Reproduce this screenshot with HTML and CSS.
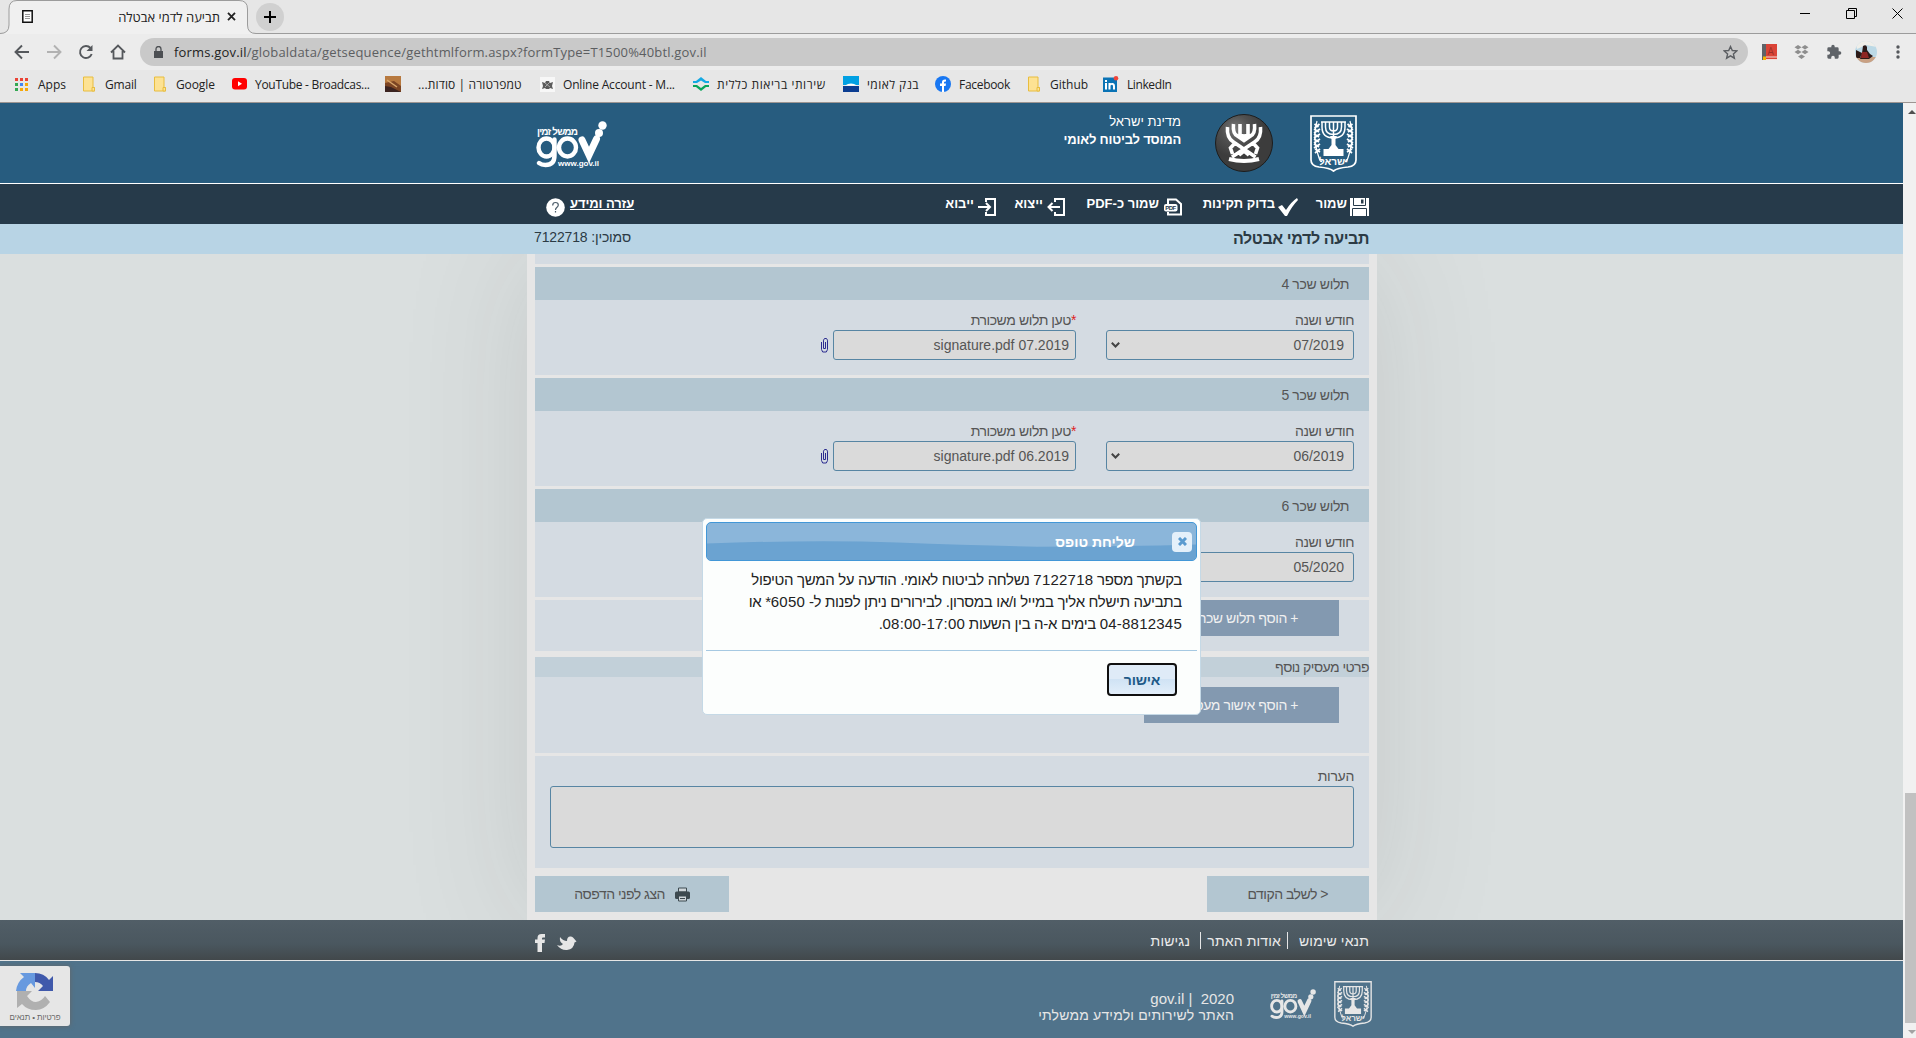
FILE: index.html
```html
<!DOCTYPE html>
<html lang="he">
<head>
<meta charset="utf-8">
<title>תביעה לדמי אבטלה</title>
<link rel="stylesheet" href="styles.css">
</head>
<body>
<svg width="0" height="0" class="defs">
  <defs>
    <symbol id="folder" viewBox="0 0 16 16"><path d="M2.500 1h9.500v10.500h1.500V15h-11z" fill="#fde293" stroke="#e8bd3f"/><path d="M11 11.500h2.500V15H11z" fill="#fde293" stroke="#e8bd3f"/></symbol>
    <symbol id="clip" viewBox="0 0 8 15"><path d="M.5 4v7.500l1.200 2.500h3.600l1.200-2.500V2.200L5.500.5h-2L2.500 2.200v8.300h2V4" fill="none" stroke="#2b2b8f"/></symbol>
    <symbol id="emblem" viewBox="0 0 47 57">
      <path d="M1 1h45v44q0 6-8 7-11 1-14.500 4Q20 53 9 52q-8-1-8-7z" fill="none" stroke="currentColor" stroke-width="1.700"/>
      <g fill="none" stroke="currentColor" stroke-width="1.500">
        <path d="M12 7v5q0 11 11.500 11T35 12V7M15.500 7v5q0 7.500 8 7.500t8-7.500V7M19.500 7v5q0 4 4 4t4-4V7M11 7h25M23.500 7v25"/>
        <path d="M7 6q-4 15 0 30t5 9M40 6q4 15 0 30t-5 9" stroke-width="1.200"/>
        <path d="M4.500 9l4 3M4 14l5 3M4 19l5 3M4 24l5 3M4 29l5 3M5 34l5 3M9.500 9l-5 4M10 14l-6 4M10 19l-6 4M10 24l-6 4M10 29l-6 4M10 34l-5 4M42.500 9l-4 3M43 14l-5 3M43 19l-5 3M43 24l-5 3M43 29l-5 3M42 34l-5 3M37.500 9l5 4M37 14l6 4M37 19l6 4M37 24l6 4M37 29l6 4M37 34l5 4" stroke-width="1.800"/>
      </g>
      <path d="M20 21h7l-1.500 3v6l3 4h5v7H13.500v-7h5l3-4v-6z" fill="currentColor"/>
      <text x="23.500" y="50" text-anchor="middle" font-size="10" font-weight="bold" fill="currentColor">ישראל</text>
    </symbol>
    <symbol id="gov" viewBox="0 0 71 47">
      <g fill="none" stroke="currentColor" stroke-width="4.400" stroke-linecap="round">
        <ellipse cx="10.500" cy="26.500" rx="8" ry="9"/><path d="M18.500 18.500v16q0 9.500-9 9.500-4 0-6.500-2"/>
        <ellipse cx="31.500" cy="26.500" rx="8.500" ry="9"/><path d="M46 19l7 15 7.500-16" stroke-width="7"/>
      </g>
      <circle cx="63" cy="12" r="4" fill="currentColor"/><circle cx="66.500" cy="4.500" r="4.200" fill="currentColor"/>
      <text x="1" y="14" textLength="41" font-size="10" font-weight="bold" fill="currentColor">ממשל זמין</text>
      <text x="22" y="45" textLength="41" font-size="8" font-weight="bold" fill="currentColor">www.gov.il</text>
    </symbol>
  </defs>
</svg>

<div class="chrome">
  <div class="tabstrip">
    <svg class="tabline" width="256" height="34" viewBox="0 0 256 34"><path d="M0 33.500Q9 33.500 9 25V9Q9 .5 17 .5H239Q247.500 .5 247.500 9V25Q247.500 33.500 256 33.500V35H0z" fill="#f0f0f0" stroke="#9c9c9c"/></svg>
    <div class="tab">
      <svg width="11" height="13"><path d="M.8.800h9.400v11.400H.8z" fill="#fff" stroke="#111" stroke-width="1.500"/><path d="M3 4.500h5M3 6.500h5M3 8.500h5" stroke="#999"/></svg>
      <span class="tabtitle" dir="rtl">תביעה לדמי אבטלה</span>
      <svg width="9" height="9"><path d="M1 .8l7 7.400M8 .8L1 8.200" stroke="#222" stroke-width="1.800"/></svg>
    </div>
    <div class="newtab"><svg width="12" height="12"><path d="M6 0v12M0 6h12" stroke="#000" stroke-width="2"/></svg></div>
    <div class="winbtns">
      <svg width="11" height="11"><path d="M0 5.500h10" stroke="#000"/></svg>
      <svg width="11" height="11"><path d="M.5 2.500h8v8h-8zM2.500 2.500v-2h8v8h-2" fill="none" stroke="#000"/></svg>
      <svg width="11" height="11"><path d="M.5.500l10 10M10.500.500l-10 10" stroke="#000"/></svg>
    </div>
  </div>
  <div class="toolbar">
    <div class="navicons">
      <svg width="16" height="16" viewBox="0 0 16 16"><path d="M15 8H2M8 1.500L1.500 8 8 14.500" fill="none" stroke="#55585c" stroke-width="1.900"/></svg>
      <svg width="16" height="16" viewBox="0 0 16 16"><path d="M1 8h13M8 1.500L14.500 8 8 14.500" fill="none" stroke="#b2b2b2" stroke-width="1.900"/></svg>
      <svg width="16" height="16" viewBox="0 0 16 16"><path d="M13.700 10A6 6 0 1 1 12.500 4" fill="none" stroke="#55585c" stroke-width="1.900"/><path d="M14.500 1v6h-6z" fill="#55585c"/></svg>
      <svg width="16" height="16" viewBox="0 0 16 16"><path d="M1 8.500L8 1.500l7 7M3.500 7v7.500h9V7" fill="none" stroke="#55585c" stroke-width="1.800"/></svg>
    </div>
    <div class="url">
      <svg width="9" height="13" viewBox="0 0 9 13"><path d="M0 5h9v7H0z" fill="#4c4f53"/><path d="M2 5V3a2.500 2.500 0 0 1 5 0v2" fill="none" stroke="#4c4f53" stroke-width="1.300"/></svg>
      <span class="urltext"><b>forms.gov.il</b>/globaldata/getsequence/gethtmlform.aspx?formType=T1500%40btl.gov.il</span>
      <svg width="15" height="15" viewBox="0 0 15 15"><path d="M7.500 1.500l1.800 4 4.400.4-3.300 3 1 4.300-3.900-2.300-3.900 2.300 1-4.300-3.300-3 4.400-.4z" fill="none" stroke="#5b5e62" stroke-width="1.400"/></svg>
    </div>
    <div class="exts">
      <svg width="15" height="16"><path d="M0 0h15v16H0z" fill="#db4437"/><path d="M0 0h4v16H0z" fill="#5f6368"/><path d="M4 13h11M4 15.500h11" stroke="#f3dcd9"/><path d="M1 12.500h3V16H1z" fill="#f4b400"/><text x="5.500" y="10.500" font-size="10" fill="#9d3028">A</text></svg>
      <svg width="15" height="14" viewBox="0 0 15 14"><path d="M4 0l3.500 2.300L4 4.600.5 2.300zM11 0l3.500 2.300L11 4.600 7.500 2.300zM4 4.700L7.500 7 4 9.300.5 7zM11 4.700L14.500 7 11 9.300 7.500 7zM7.500 9.400L11 11.500 7.500 14 4 11.500z" fill="#8e8e8e"/></svg>
      <svg width="16" height="16" viewBox="0 0 24 24"><path d="M20.500 11H19V7a2 2 0 0 0-2-2h-4V3.500a2.500 2.500 0 0 0-5 0V5H4a2 2 0 0 0-2 2v3.800h1.500a2.700 2.700 0 0 1 0 5.400H2V20a2 2 0 0 0 2 2h3.800v-1.500a2.700 2.700 0 0 1 5.400 0V22H17a2 2 0 0 0 2-2v-4h1.500a2.500 2.500 0 0 0 0-5z" fill="#5f6368"/></svg>
      <svg class="avatar" width="22" height="22" viewBox="0 0 22 22"><path d="M0 0h22v22H0z" fill="#bcd9e6"/><path d="M0 0h22v6L11 4 2 8z" fill="#efeee9"/><path d="M0 16h22v6H0z" fill="#c9a184"/><path d="M1 9l6 3-2 5H1zM8 5q3-2 4 1v3l3 4 3 2-4 3H5l2-6z" fill="#2c1a18"/><path d="M7 11h5l2 6H6z" fill="#8e2522"/></svg>
      <svg width="4" height="14"><g fill="#55585c"><circle cx="2" cy="2" r="1.700"/><circle cx="2" cy="7" r="1.700"/><circle cx="2" cy="12" r="1.700"/></g></svg>
    </div>
  </div>
  <div class="bookmarks">
    <div class="bm apps"><svg width="13" height="13"><path d="M0 0h3v3H0zM5 0h3v3H5zM10 0h3v3h-3z" fill="#ea4335"/><path d="M0 5h3v3H0zM0 10h3v3H0z" fill="#34a853"/><path d="M5 5h3v3H5z" fill="#4285f4"/><path d="M10 5h3v3h-3zM5 10h3v3H5zM10 10h3v3h-3z" fill="#f5a80b"/></svg><span>Apps</span></div>
    <div class="bm gmail"><svg width="16" height="16"><use href="#folder"/></svg><span>Gmail</span></div>
    <div class="bm google"><svg width="16" height="16"><use href="#folder"/></svg><span>Google</span></div>
    <div class="bm youtube"><svg width="15" height="12"><rect width="15" height="11.500" rx="3" fill="#f00"/><path d="M6 3.300v5l4-2.500z" fill="#fff"/></svg><span>YouTube - Broadcas...</span></div>
    <div class="bm temp"><svg width="16" height="16"><path d="M0 0h16v16H0z" fill="#7b4423"/><path d="M0 0h16v10L9 5 0 7z" fill="#b7793f"/><path d="M0 10l6 1 10 5H0z" fill="#3b2320"/><path d="M2 4l10 7" stroke="#d8a66b" stroke-width="1.500"/></svg><span dir="rtl">טמפרטורה | סודות...</span></div>
    <div class="bm online"><svg width="15" height="15"><path d="M0 0h15v15H0z" fill="#f7f7f7"/><path d="M2 5l3 1 1-2h3l1 2 3-1-1 4 1 3-3-1-1 1H6l-1-1-3 1 1-3z" fill="#5c5c5c"/><path d="M5 6l5 4M10 5l-5 5" stroke="#bbb" stroke-width=".8"/></svg><span>Online Account - M...</span></div>
    <div class="bm clalit"><svg width="16" height="16" viewBox="0 0 16 16"><path d="M0 7V5h3l5-4 5 4h3v2h-4L8 4.500 4 7z" fill="#14a9e3"/><path d="M0 9v2h3l5 4 5-4h3V9h-4l-4 3-4-3z" fill="#0aa55b"/></svg><span dir="rtl">שירותי בריאות כללית</span></div>
    <div class="bm leumi"><svg width="16" height="16"><path d="M0 0h16v9H0z" fill="#00a0e3"/><path d="M0 10h16v6H0z" fill="#0b3d91"/><path d="M2 9.500q6-4 12 0z" fill="#fff"/></svg><span dir="rtl">בנק לאומי</span></div>
    <div class="bm fb"><svg width="16" height="16"><circle cx="8" cy="8" r="8" fill="#1877f2"/><path d="M7 16v-6H5V7.500h2V6q0-3 4-2.500v2Q9 5.300 9 6.500v1h2L10.600 10H9v6z" fill="#fff"/></svg><span>Facebook</span></div>
    <div class="bm github"><svg width="16" height="16"><use href="#folder"/></svg><span>Github</span></div>
    <div class="bm linkedin"><svg width="16" height="16"><path d="M0 1.500h14V16H0z" fill="#0a73b5"/><path d="M2 7h2v6.500H2zM2 4h2v2H2zM5.500 7h2v6.500h-2zM7 8q1-1.500 3-1 2 .4 2 3v3.500h-2V10Q9.500 8 7.500 9.500z" fill="#fff"/><circle cx="13" cy="2.300" r="2.300" fill="#f0453a"/></svg><span>LinkedIn</span></div>
  </div>
</div>

<div class="viewport">
  <div class="page" dir="rtl">
    <header class="masthead">
      <div class="wrap">
        <svg class="state" width="47" height="57"><use href="#emblem"/></svg>
        <svg class="btl" width="58" height="58" viewBox="0 0 58 58"><defs><radialGradient id="disc" cx=".35" cy=".25"><stop offset="0" stop-color="#777"/><stop offset=".5" stop-color="#505050"/><stop offset="1" stop-color="#3c3c3c"/></radialGradient></defs><circle cx="29" cy="29" r="28.500" fill="url(#disc)" stroke="#1d1d1d"/><g fill="none" stroke="#fff" stroke-width="3.600"><path d="M12.500 13q-1 11 6 15l22 15M45.500 13q1 11-6 15L17 43M18.500 10q-1 10 4 12l6.500 4.500 6.500-4.500q5-2 4-12M25 10v10l4 2.500 4-2.500V10M20 29l-4.500 5 2 6M38 29l4.500 5-2 6M29 37l-5 4M29 37l5 4"/><path d="M14 45q15 4 30 0" stroke-width="4"/></g></svg>
        <div class="org"><span>מדינת ישראל</span><b>המוסד לביטוח לאומי</b></div>
        <svg class="govlogo" width="71" height="47"><use href="#gov"/></svg>
      </div>
    </header>
    <nav class="actions">
      <div class="wrap">
        <a class="act save"><svg width="19" height="18"><path d="M0 0h19v18H0z" fill="#fff"/><path d="M3.500 0v7.500h12V0M2.500 18v-7.500h14V18" fill="none" stroke="#263a4a"/><path d="M11 1.500h2.500v4H11z" fill="#263a4a"/></svg><span>שמור</span></a>
        <a class="act check"><svg width="20" height="18"><path d="M0 9l4-2 4 5Q13 4 19 0l1 2Q14 8 9 18H7z" fill="#fff"/></svg><span>בדוק תקינות</span></a>
        <a class="act pdf"><svg width="18" height="18"><path d="M4 6V1.500h8l5 4.500v10.500H4V14" fill="none" stroke="#fff" stroke-width="2"/><rect y="6" width="13.500" height="7.500" rx="2" fill="#fff"/><text x="1.200" y="12" textLength="11" font-size="6" font-weight="bold" fill="#263a4a">PDF</text></svg><span>שמור כ-PDF</span></a>
        <a class="act export"><svg width="18" height="18"><path d="M8 4V1h9v16H8v-3M13 9H2M5.500 5L1.500 9l4 4" fill="none" stroke="#fff" stroke-width="2"/></svg><span>ייצוא</span></a>
        <a class="act import"><svg width="18" height="18"><path d="M8 4V1h9v16H8v-3M0 9h11M8 5l4 4-4 4" fill="none" stroke="#fff" stroke-width="2"/></svg><span>ייבוא</span></a>
        <a class="act help"><span>עזרה ומידע</span><svg width="19" height="19"><circle cx="9.500" cy="9.500" r="9.300" fill="#fff"/><path d="M6.700 7.500q0-3 2.800-3t2.800 2.600q0 1.400-1.500 2.400-1.300 1-1.300 2.500M9.500 13v1.500" fill="none" stroke="#4b5c69" stroke-width="1.200"/></svg></a>
      </div>
    </nav>
    <div class="titlebar"><div class="wrap"><h1>תביעה לדמי אבטלה</h1><span>סמוכין: 7122718</span></div></div>

    <main class="content">
      <div class="sheet">
        <div class="tail"></div>
        <section>
          <h2>תלוש שכר 4</h2>
          <div class="fields">
            <div class="field month"><label>חודש ושנה</label><div class="box">07/2019<svg width="9" height="6"><path d="M.8.800l3.700 3.700L8.200.800" fill="none" stroke="#444" stroke-width="2"/></svg></div></div>
            <div class="field file"><label><i>*</i>טען תלוש משכורת</label><div class="row"><div class="box"><span dir="ltr">signature.pdf 07.2019</span></div><svg class="clip" width="8" height="15"><use href="#clip"/></svg></div></div>
          </div>
        </section>
        <section>
          <h2>תלוש שכר 5</h2>
          <div class="fields">
            <div class="field month"><label>חודש ושנה</label><div class="box">06/2019<svg width="9" height="6"><path d="M.8.800l3.700 3.700L8.200.800" fill="none" stroke="#444" stroke-width="2"/></svg></div></div>
            <div class="field file"><label><i>*</i>טען תלוש משכורת</label><div class="row"><div class="box"><span dir="ltr">signature.pdf 06.2019</span></div><svg class="clip" width="8" height="15"><use href="#clip"/></svg></div></div>
          </div>
        </section>
        <section>
          <h2>תלוש שכר 6</h2>
          <div class="fields">
            <div class="field month"><label>חודש ושנה</label><div class="box">05/2020</div></div>
          </div>
        </section>
        <section class="add"><button>+ הוסף תלוש שכר</button></section>
        <section class="employer">
          <h3>פרטי מעסיק נוסף</h3>
          <button>+ הוסף אישור מעסיק</button>
        </section>
        <section class="notes"><label>הערות</label><div class="area"></div></section>
        <div class="steps">
          <button class="prev">&lt; לשלב הקודם</button>
          <button class="print"><svg width="15" height="15"><path d="M3.500 1h8v4h-8z" fill="#cfd6da" stroke="#3d4a50"/><rect y="4.500" width="15" height="7.500" rx="1.500" fill="#3d4a50"/><path d="M3.500 9h8v5h-8z" fill="#cfd6da" stroke="#3d4a50"/><path d="M5 11.500h5" stroke="#3d4a50"/></svg><span>הצג לפני הדפסה</span></button>
        </div>
      </div>
    </main>

    <div class="links">
      <div class="wrap">
        <a class="terms">תנאי שימוש</a><a class="about">אודות האתר</a><a class="access">נגישות</a>
        <div class="social">
          <svg width="20" height="15" viewBox="0 0 20 15"><path d="M0 9q4 2 6-1Q2 6 3 1q3 4 7 4Q10 0 14 .500q1.500 0 2.500 1.500L19.500 5.500 17.500 6.500Q17 13 10 14 4 14.500 0 9z" fill="#e6e6e6"/></svg>
          <svg width="10" height="18"><path d="M2.500 18V9H0V5.500h2.500V4q0-4 4-4H10v3.500H8q-1 0-1 1v1h3L9.500 9H7v9z" fill="#e6e6e6"/></svg>
        </div>
      </div>
    </div>
    <footer class="foot">
      <div class="wrap">
        <svg class="state" width="38" height="46" viewBox="0 0 47 57"><use href="#emblem" width="47" height="57"/></svg>
        <svg class="govlogo" width="46" height="30.500" viewBox="0 0 71 47"><use href="#gov" width="71" height="47"/></svg>
        <div class="copy"><span dir="ltr">gov.il |&nbsp; 2020</span><span>האתר לשירותים ולמידע ממשלתי</span></div>
      </div>
    </footer>

    <div class="captcha">
      <svg width="38" height="38" viewBox="0 0 38 38"><path d="M19 1Q28 1 33 8l4-4v15H22l5-5q-3-4-8-4z" fill="#4059ab"/><path d="M19 1v15l-4-5q-5 3-5 8H0Q1 10 8 5L4 1z" fill="#6799df"/><path d="M1 19h15l-5 5q4 6 9 6 6-1 9-6l5 6q-6 8-14 8-9 0-14-6l-5 4z" fill="#b0b0b0"/></svg>
      <span>פרטיות • תנאים</span>
    </div>

    <div class="dialog">
      <div class="dtitle">
        <svg class="wave" width="489" height="36" preserveAspectRatio="none" viewBox="0 0 489 36"><path d="M0 20Q110 16 190 19T330 23Q420 23 489 21V36H0z" fill="#6ba3d1"/></svg>
        <span class="x"><svg width="9" height="9"><path d="M1 1l7 7M8 1L1 8" stroke="#5a9bd0" stroke-width="3"/></svg></span>
        <b>שליחת טופס</b>
      </div>
      <div class="dbody"><p>בקשתך מספר <span>7122718</span> נשלחה לביטוח לאומי. הודעה על המשך הטיפול</p><p>בתביעה תישלח אליך במייל ו/או במסרון. לבירורים ניתן לפנות ל- <span>6050</span>* או</p><p><span>04-8812345</span> בימים א-ה בין השעות <span>08:00-17:00</span>.</p></div>
      <div class="dbtns"><button>אישור</button></div>
    </div>
  </div>
  <div class="scroll"><i class="up"></i><div class="thumb"></div><i class="down"></i></div>
</div>
</body>
</html>
```
FILE: styles.css
```css
* { box-sizing: border-box; }
html, body { margin: 0; height: 1038px; overflow: hidden; }
body { font-family: "Liberation Sans", Arial, sans-serif; font-size: 14px; color: #555; display: flex; flex-direction: column; }
svg { display: block; flex: none; direction: ltr; letter-spacing: 0; }
.defs { position: absolute; }
button { font: inherit; border: 0; padding: 0; margin: 0; }
span, b, a, label, p, h1, h2, h3 { white-space: nowrap; }

/* browser window */
.chrome { height: 103px; flex: none; background: #e7e7e7; border-bottom: 1px solid #9c9592; font-family: "Open Sans", sans-serif; color: #222; }
.tabstrip { height: 34px; position: relative; display: flex; align-items: center; border-bottom: 1px solid #9c9c9c; background: #e6e6e6; }
.tabline { position: absolute; left: 0; top: 0; }
.tab { position: relative; width: 236px; padding-left: 22px; display: flex; align-items: center; font-size: 13px; }
.tabtitle { margin-left: auto; margin-right: 7px; }
.newtab { width: 28px; height: 28px; margin-left: 20px; border-radius: 50%; background: #d0d0d0; display: flex; align-items: center; justify-content: center; }
.winbtns { margin-left: auto; padding: 0 13px 6px 0; display: flex; gap: 35px; }
.toolbar { height: 36px; display: flex; align-items: center; background: #ececec; padding-left: 14px; }
.navicons { width: 126px; display: flex; gap: 16px; }
.url { width: 1608px; height: 28px; border-radius: 14px; background: #c9c9c9; display: flex; align-items: center; padding: 0 10px 0 14px; }
.urltext { margin: 0 auto 0 11px; font-size: 13px; letter-spacing: .18px; color: #5c5e61; }
.urltext b { font-weight: 400; color: #222; }
.exts { display: flex; align-items: center; margin-left: 14px; gap: 17px; }
.avatar { border-radius: 50%; margin-left: -4px; }
.exts > :last-child { margin-left: 2px; }
.bookmarks { height: 32px; display: flex; align-items: center; padding: 0 0 4px 15px; font-size: 12px; }
.bm { display: flex; align-items: center; gap: 8px; }
.apps { width: 66px; gap: 10px; }
.gmail { width: 71px; letter-spacing: -.2px; }
.google { width: 80px; letter-spacing: -.1px; }
.youtube { width: 153px; letter-spacing: -.3px; }
.temp { width: 155px; gap: 17px; letter-spacing: .12px; }
.online { width: 153px; letter-spacing: -.18px; }
.clalit { width: 150px; letter-spacing: .57px; }
.leumi { width: 92px; letter-spacing: .45px; }
.fb { width: 91px; letter-spacing: -.3px; }
.github { width: 77px; }
.linkedin { letter-spacing: -.4px; }

/* page */
.viewport { flex: 1; display: flex; }
.page { width: 1903px; position: relative; background: #dadfdf; }
.wrap { width: 834px; margin-left: 534px; margin-right: 534px; display: flex; height: 100%; }
.masthead { height: 81px; background: #275c7f; border-bottom: 1px solid #fff; color: #fff; }
.masthead .state { margin: 12px 12px 0 0; }
.masthead .btl { margin: 11px 37px 0 0; }
.org { margin: 10px 34px 0 0; display: flex; flex-direction: column; line-height: 18px; font-size: 13px; }
.org b { letter-spacing: -.2px; }
.masthead .govlogo { margin: 18px auto 0 1px; }
.actions { height: 40px; background: #263a4a; color: #fff; font-weight: 700; font-size: 13px; }
.act { display: flex; align-items: flex-start; padding-top: 14px; gap: 3px; }
.act span { line-height: 16px; margin-top: -2px; }
.save { width: 71px; }
.check { width: 116px; }
.pdf { width: 117px; gap: 5px; }
.export { width: 69px; gap: 4px; }
.import { gap: 4px; }
.help { margin-right: auto; padding-left: 11px; gap: 5px; letter-spacing: -.1px; }
.help span { text-decoration: underline; }
.titlebar { height: 30px; background: #b8d4e5; color: #2b3a44; }
.titlebar .wrap { justify-content: space-between; line-height: 27px; }
.titlebar span { margin-left: -1px; letter-spacing: -.15px; }
h1 { margin: 0; font-size: 16px; line-height: 29px; letter-spacing: -.4px; }

.content { height: 666px; overflow: hidden; padding-right: 526px; }
.sheet { width: 850px; height: 666px; background: #e6e6e6; padding: 0 8px; box-shadow: 0 0 120px rgba(60, 60, 60, .13); }
.tail { height: 10px; background: #d4dbe2; margin-bottom: 3px; }
section { background: #d4dbe2; margin-bottom: 3px; }
h2 { margin: 0; height: 33px; line-height: 34px; padding-right: 20px; font-size: 14px; font-weight: 400; letter-spacing: -.37px; background: #b3c6d1; }
.fields { height: 75px; padding: 12px 15px 0 0; display: flex; gap: 30px; }
.field label { display: block; line-height: 16px; margin-bottom: 2px; letter-spacing: -.43px; }
.field i { font-style: normal; color: #d22; }
.box { height: 30px; border: 1px solid #5785a3; border-radius: 3px; background: #dadada; display: flex; align-items: center; justify-content: space-between; padding: 0 9px 0 4px; }
.month .box { width: 248px; }
.file .box { width: 243px; padding-right: 6px; }
.row { display: flex; align-items: center; gap: 4px; }
section button { display: block; width: 195px; height: 36px; background: #8399b0; color: #f0f0f0; padding-right: 41px; text-align: right; margin-right: 30px; letter-spacing: -.45px; }
.add { height: 51px; margin-bottom: 6px; }
.employer { height: 96px; }
h3 { margin: 0 0 10px; height: 20px; line-height: 21px; font-size: 14px; font-weight: 400; letter-spacing: -.55px; background: #c2d0d9; }
.notes { height: 112px; padding: 12px 15px 0; margin-bottom: 8px; }
.notes label { display: block; line-height: 16px; margin-bottom: 2px; letter-spacing: -.3px; }
.area { height: 62px; border: 1px solid #5785a3; border-radius: 3px; background: #dadada; }
.steps { display: flex; justify-content: space-between; }
.steps button { height: 36px; background: #b3c6d1; color: #555; display: flex; align-items: center; letter-spacing: -.5px; }
.prev { width: 162px; padding-right: 41px !important; }
.print { width: 194px; padding-right: 39px !important; gap: 10px; }

.links { height: 41px; background: linear-gradient(#515e67, #4a575f 60%, #42484b); border-bottom: 1px solid #e6e6e6; color: #ececec; }
.links .wrap { align-items: flex-start; padding-top: 12px; }
.links a { line-height: 18px; height: 17px; letter-spacing: .15px; }
.terms { width: 82px; border-left: 1px solid #e6e6e6; }
.about { width: 87px; padding-right: 6px; border-left: 1px solid #e6e6e6; }
.access { padding-right: 10px; }
.social { display: flex; margin-right: auto; gap: 12px; align-items: center; padding-top: 2px; }
.foot { height: 77px; background: #50738b; color: #e6e6e6; }
.foot .state { margin: 20px -3px 0 0; }
.foot .govlogo { margin: 28px 18px 0 0; }
.copy { display: flex; flex-direction: column; margin: 30px 36px 0 0; line-height: 16px; align-items: flex-start; font-size: 15px; }
.copy span + span { font-size: 14px; letter-spacing: .18px; }

.captcha { position: absolute; left: 0; top: 863px; width: 70px; height: 60px; background: #e6e6e6; border-radius: 0 3px 3px 0; box-shadow: 0 0 5px #666; display: flex; flex-direction: column; align-items: center; padding-top: 6px; font-size: 8px; color: #666; gap: 3px; letter-spacing: -.1px; }

/* confirmation dialog */
.dialog { position: absolute; left: 702px; top: 415px; width: 499px; height: 197px; background: #fcfefd; border: 1px solid #c5d9e6; border-radius: 5px; padding: 3px; color: #222; }
.dtitle { position: relative; height: 39px; border: 1px solid #4297d7; border-radius: 5px; background: #8bb6da; color: #fff; overflow: hidden; display: flex; align-items: center; padding-right: 4px; font-size: 14px; }
.wave { position: absolute; left: 0; top: 0; height: 37px; width: 100%; }
.x { position: relative; width: 20px; height: 20px; border-radius: 4px; background: #e4f0fa; display: flex; align-items: center; justify-content: center; }
.dtitle b { position: relative; margin-right: 37px; }
.dbody { height: 90px; padding: 8px 15px 0; border-bottom: 1px solid #a6c9e2; font-size: 15px; }
.dbody p { margin: 0; line-height: 22px; letter-spacing: -.33px; }
.dbody span { letter-spacing: .22px; }
.dbtns { padding: 12px 20px 0; }
.dbtns button { width: 70px; height: 33px; border: 2px solid #101010; border-radius: 4px; background: linear-gradient(#dfebf7 50%, #d0e3f4 50%, #e2eefa); color: #1d5987; font-weight: 700; letter-spacing: -.2px; }

.scroll { width: 13px; background: #f1f1f1; display: flex; flex-direction: column; align-items: flex-end; padding: 7px 0 4px; }
.scroll i { border: 4px solid transparent; width: 0; height: 0; }
.up { border-bottom-color: #505050 !important; border-top: 0 !important; }
.down { border-top-color: #a3a3a3 !important; border-bottom: 0 !important; margin-top: auto; }
.thumb { width: 11px; height: 230px; background: #c1c1c1; margin-top: 679px; }
```
